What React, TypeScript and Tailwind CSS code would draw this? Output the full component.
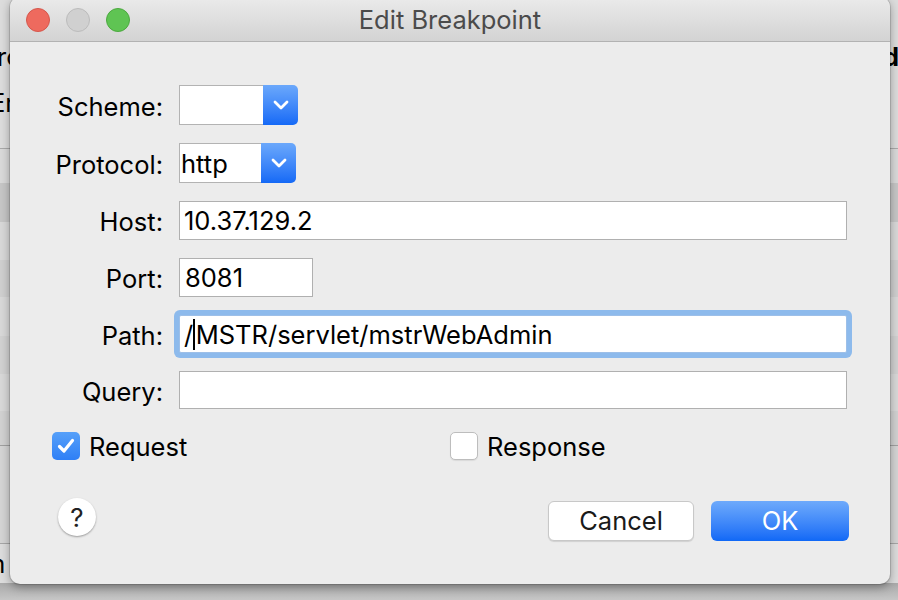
import React from "react";

function Chevron() {
  return (
    <svg width="16" height="10" viewBox="0 0 16 10" fill="none">
      <path d="M2 2 L8 8 L14 2" stroke="white" strokeWidth="2.8" strokeLinecap="round" strokeLinejoin="round" />
    </svg>
  );
}

function Check() {
  return (
    <svg width="20" height="18" viewBox="0 0 20 18" fill="none">
      <path d="M3.5 9.5 L8 14 L16.5 3.5" stroke="white" strokeWidth="3.2" strokeLinecap="round" strokeLinejoin="round" />
    </svg>
  );
}

export default function App() {
  return (
    <div className="relative w-[898px] h-[600px] overflow-hidden bg-[#d6d6d6] font-['Inter','Noto_Sans',sans-serif] text-black">
      {/* window behind */}
      <div className="flex flex-col w-full h-full text-[25.5px]">
        <div className="h-[149px] shrink-0 bg-[#dcdcdc] border-b border-[#a9a9a9] flex flex-col pt-[42px]">
          <div className="flex justify-between leading-[30px]">
            <span className="-ml-[3px]">rc</span>
            <span className="font-bold -mr-[1px]">d</span>
          </div>
          <div className="leading-[30px] mt-[16px]">
            <span className="-ml-[10px] inline-block">Er</span>
          </div>
        </div>
        <div className="h-[34px] shrink-0 bg-[#d9d9d9]" />
        <div className="h-[39px] shrink-0 bg-[#c6c6c6]" />
        <div className="h-[38px] shrink-0 bg-[#d8d8d8]" />
        <div className="h-[37px] shrink-0 bg-[#cfcfcf]" />
        <div className="h-[39px] shrink-0 bg-[#d8d8d8]" />
        <div className="h-[38px] shrink-0 bg-[#d1d1d1]" />
        <div className="h-[37px] shrink-0 bg-[#d8d8d8]" />
        <div className="h-[35px] shrink-0 bg-[#d1d1d1] border-b border-[#a0a0a0]" />
        <div className="h-[98px] shrink-0 bg-[#d4d4d4] border-b border-[#a6a6a6]" />
        <div className="h-[39px] shrink-0 bg-[#dcdcdc] flex items-center">
          <span className="-ml-[17px] inline-block leading-[30px]">m</span>
        </div>
        <div className="flex-1 bg-linear-to-b from-[#a9a9a9] to-[#c6c6c6]" />
      </div>

      {/* dialog */}
      <div className="absolute left-[10px] top-[-3px] w-[880px] h-[587px] rounded-[10px] bg-[#ececec] shadow-[0_3px_10px_rgba(0,0,0,0.35),0_0_0_1px_rgba(0,0,0,0.12)] flex flex-col overflow-hidden text-[25.5px]">
        {/* title bar */}
        <div className="h-[45px] shrink-0 grid grid-cols-[1fr_auto_1fr] items-center pt-[2px] bg-linear-to-b from-[#ebebeb] to-[#d3d3d3] border-b border-[#b2b2b2]">
          <div className="flex items-center gap-[16px] pl-[16px]">
            <div className="w-[24px] h-[24px] rounded-full bg-[#ee6a5e] border border-[#d5574c]" />
            <div className="w-[24px] h-[24px] rounded-full bg-[#d0d0d0] border border-[#bcbcbc]" />
            <div className="w-[24px] h-[24px] rounded-full bg-[#5fc453] border border-[#4ca93f]" />
          </div>
          <div className="text-[#4b4b4b] leading-[30px]">Edit Breakpoint</div>
          <div />
        </div>

        {/* body */}
        <div className="flex flex-col pt-[43px]">
          <div className="flex flex-col gap-[18px]">
            {/* Scheme */}
            <div className="flex items-center h-[40px]">
              <div className="w-[153px] text-right pt-[4px]">Scheme:</div>
              <div className="ml-[16px] flex h-[40px] w-[119px]">
                <div className="flex-1 bg-white border border-r-0 border-[#b3b3b3]" />
                <div className="w-[35px] rounded-r-[5px] bg-linear-to-b from-[#6ba8fb] to-[#1469f6] flex items-center justify-center">
                  <Chevron />
                </div>
              </div>
            </div>
            {/* Protocol */}
            <div className="flex items-center h-[40px]">
              <div className="w-[153px] text-right pt-[4px]">Protocol:</div>
              <div className="ml-[16px] flex h-[40px] w-[117px]">
                <div className="flex-1 bg-white border border-r-0 border-[#b3b3b3] flex items-center pl-[1px] pt-[2px]">
                  http
                </div>
                <div className="w-[35px] rounded-r-[5px] bg-linear-to-b from-[#6ba8fb] to-[#1469f6] flex items-center justify-center">
                  <Chevron />
                </div>
              </div>
            </div>
            {/* Host */}
            <div className="flex items-center h-[39px]">
              <div className="w-[153px] text-right pt-[4px]">Host:</div>
              <div className="ml-[16px] h-[39px] w-[668px] bg-white border border-[#b0b0b0] flex items-center pl-[4px] pt-[2px]">
                10.37.129.2
              </div>
            </div>
            {/* Port */}
            <div className="flex items-center h-[39px]">
              <div className="w-[153px] text-right pt-[4px]">Port:</div>
              <div className="ml-[16px] h-[39px] w-[134px] bg-white border border-[#b0b0b0] flex items-center pl-[5px] pt-[2px]">
                8081
              </div>
            </div>
            {/* Path */}
            <div className="flex items-center h-[38px]">
              <div className="w-[153px] text-right pt-[4px]">Path:</div>
              <div className="ml-[16px] h-[38px] w-[668px] bg-white border border-[#9dbfe8] rounded-[2px] ring-[5px] ring-[#8dbaec] flex items-center pl-[4px] pt-[2px]">
                <span>/</span>
                <span className="inline-block w-[1.5px] h-[31px] bg-black mr-[1px] -mt-[2px]" />
                <span>MSTR/servlet/mstrWebAdmin</span>
              </div>
            </div>
            {/* Query */}
            <div className="flex items-center h-[38px]">
              <div className="w-[153px] text-right pt-[4px]">Query:</div>
              <div className="ml-[16px] h-[38px] w-[668px] bg-white border border-[#b0b0b0]" />
            </div>
          </div>

          {/* checkboxes */}
          <div className="flex items-center h-[28px] mt-[23px]">
            <div className="w-[440px] flex items-center pl-[42px] gap-[9px]">
              <div className="w-[28px] h-[28px] rounded-[5px] bg-linear-to-b from-[#56a0f9] to-[#2e7ff6] flex items-center justify-center">
                <Check />
              </div>
              <span className="pt-[3px]">Request</span>
            </div>
            <div className="flex items-center gap-[9px]">
              <div className="w-[28px] h-[28px] rounded-[5px] bg-white border border-[#bdbdbd] shadow-[0_1px_1px_rgba(0,0,0,0.08)]" />
              <span className="pt-[3px]">Response</span>
            </div>
          </div>

          {/* bottom buttons */}
          <div className="flex items-start h-[40px] mt-[41px] pl-[48px] pr-[41px]">
            <div className="-mt-[3px] w-[38px] h-[38px] rounded-full bg-white shadow-[0_1px_2px_rgba(0,0,0,0.35)] flex items-center justify-center text-[26px] text-[#222] pt-[1px]">
              ?
            </div>
            <div className="flex-1" />
            <div className="w-[146px] h-[40px] rounded-[6px] bg-white border border-[#c8c8c8] shadow-[0_1px_1px_rgba(0,0,0,0.12)] flex items-center justify-center text-[#1a1a1a] pt-[1px]">
              Cancel
            </div>
            <div className="ml-[17px] w-[138px] h-[40px] rounded-[6px] bg-linear-to-b from-[#6eaafb] to-[#0f68f6] flex items-center justify-center text-white pt-[1px]">
              OK
            </div>
          </div>
        </div>
      </div>
    </div>
  );
}
